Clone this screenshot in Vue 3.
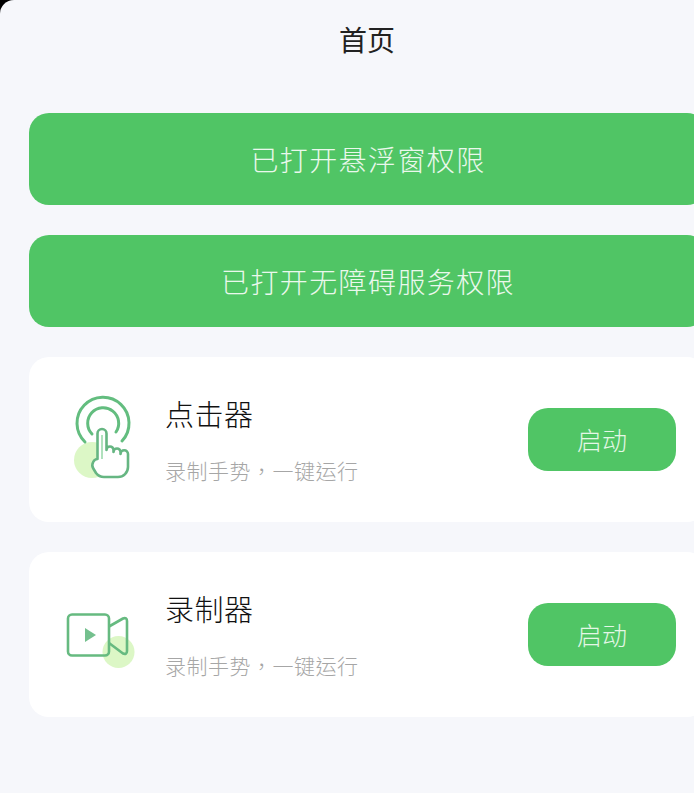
<script setup>
const tools = [
  { name: '点击器', desc: '录制手势，一键运行', icon: 'click' },
  { name: '录制器', desc: '录制手势，一键运行', icon: 'video' }
]
</script>

<template>
  <div class="page">
    <h1 class="title">首页</h1>
    <div class="perm">已打开悬浮窗权限</div>
    <div class="perm">已打开无障碍服务权限</div>
    <div v-for="t in tools" :key="t.name" class="card">
      <svg v-if="t.icon === 'click'" class="icon" viewBox="0 0 110 110" fill="none">
        <circle cx="42" cy="75" r="18" fill="#dcf7c6" />
        <path d="M35 57A26 26 0 1 1 72 56" stroke="#63bd7f" stroke-width="3" stroke-linecap="round" />
        <path d="M42 49A15.500 15.500 0 1 1 66 47" stroke="#63bd7f" stroke-width="3" stroke-linecap="round" />
        <path d="M47.500 74V48.500a4.500 4.500 0 0 1 9 0V65a3.500 3.500 0 0 1 7 0V67a3.500 3.500 0 0 1 7 0V69a3.500 3.500 0 0 1 7.500 0V82a10 10 0 0 1-10 10H54a10 10 0 0 1-8-4L43 83C41 79 44 74 47.500 74Z" fill="#fff" stroke="#66b682" stroke-width="2.600" stroke-linejoin="round" />
        <path d="M52 50V74" stroke="#62c47c" stroke-width="2" opacity=".5" />
      </svg>
      <svg v-else class="icon" viewBox="0 0 110 110" fill="none">
        <circle cx="68.500" cy="72" r="16" fill="#dcf7c6" />
        <rect x="18" y="34.500" width="41" height="41" rx="4" stroke="#66ba80" stroke-width="2.600" />
        <path d="M59 46.500L73 38.500C75.500 37.500 77 38.500 77 41V71C77 73.500 75.500 74.500 73 73.500L59 63" stroke="#66ba80" stroke-width="2.600" stroke-linejoin="round" />
        <path d="M35 48L46 55L35 62Z" fill="#74c08e" />
      </svg>
      <div class="info">
        <div class="name">{{ t.name }}</div>
        <div class="desc">{{ t.desc }}</div>
      </div>
      <div class="btn">启动</div>
    </div>
  </div>
</template>

<style scoped>
.page {
  width: 694px;
  height: 793px;
  box-sizing: border-box;
  background: #f6f7fb;
  border-top-left-radius: 14px;
  padding: 0 0 0 29px;
  overflow: hidden;
  font-family: "Noto Sans CJK SC", "Noto Sans", sans-serif;
  font-weight: 300;
}
.title {
  width: 676px;
  margin: 0 0 52px;
  height: 61px;
  padding-top: 19px;
  box-sizing: border-box;
  text-align: center;
  font-size: 28px;
  line-height: 40px;
  font-weight: 400;
  color: #222;
}
.perm {
  width: 678px;
  height: 92px;
  margin-bottom: 30px;
  background: #50c565;
  border-radius: 20px;
  color: #eaf8ec;
  font-size: 28px;
  line-height: 92px;
  letter-spacing: 1.400px;
  text-align: center;
}
.card {
  width: 678px;
  height: 165px;
  margin-bottom: 30px;
  background: #fff;
  border-radius: 20px;
  display: flex;
  align-items: center;
}
.icon {
  width: 110px;
  height: 110px;
  margin-left: 21px;
  flex: none;
}
.info {
  margin-left: 5px;
  padding-bottom: 1px;
  flex: 1;
}
.name {
  font-size: 29px;
  line-height: 40px;
  letter-spacing: 0.500px;
  font-weight: 300;
  color: #111;
}
.desc {
  margin-top: 22px;
  font-family: "Noto Sans CJK TC", "Noto Sans CJK SC", sans-serif;
  font-size: 21px;
  line-height: 30px;
  letter-spacing: 0.500px;
  color: #a6a6a6;
}
.btn {
  width: 148px;
  height: 63px;
  margin-right: 31px;
  background: #50c565;
  border-radius: 20px;
  color: #e4f7e6;
  font-size: 25px;
  line-height: 63px;
  text-align: center;
}
</style>

<style>
html, body { margin: 0; background: #000; }
</style>
